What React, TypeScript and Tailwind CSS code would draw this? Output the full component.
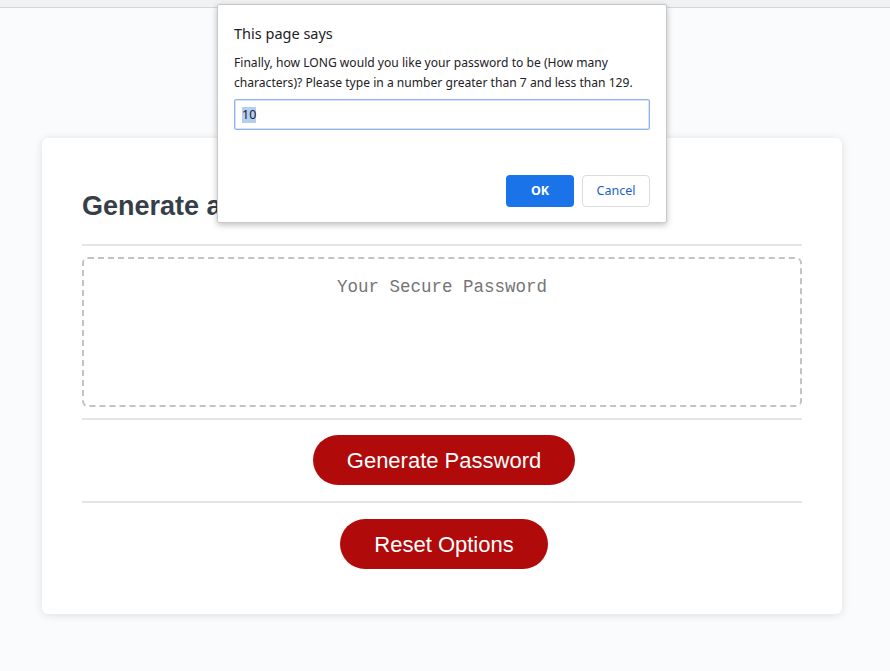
import React from "react";

const PromptDialog = () => {
  return (
    <div className="absolute left-[217px] top-[4px] w-[450px] h-[219px] bg-white border border-[#c9c9c9] rounded-[2px] shadow-[0_2px_6px_rgba(0,0,0,0.25)] px-4 font-['Noto_Sans',sans-serif] text-[#202124]">
      <div className="pt-[18px] text-[14.5px] leading-[20px]">This page says</div>
      <p className="mt-[10px] text-[12.1px] leading-[19.5px] whitespace-nowrap">
        Finally, how LONG would you like your password to be (How many
        <br />
        characters)? Please type in a number greater than 7 and less than 129.
      </p>
      <div className="mt-[7px] h-[31px] border border-[#8fb3e8] rounded-[2px] shadow-[inset_0_0_0_1px_#d4e3f8] flex items-center px-[7px]">
        <span className="text-[12.5px] bg-[#b4cdf2] leading-[16px]">10</span>
      </div>
      <div className="mt-[45px] flex justify-end gap-2">
        <button className="w-[68px] h-[32px] rounded-[4px] bg-[#1a73e8] text-white text-[12.5px] font-bold">
          OK
        </button>
        <button className="w-[68px] h-[32px] rounded-[4px] bg-white border border-[#dadce0] text-[#1a5fc8] text-[12.5px]">
          Cancel
        </button>
      </div>
    </div>
  );
};

export default function App() {
  return (
    <div className="relative min-h-screen bg-[#f9fbfd] font-['Liberation_Sans',Arial,sans-serif]">
      {/* header remnant */}
      <div className="h-2 bg-[#f1f2f3] border-b border-[#d6d6d6]" />

      <div className="pt-[130px] pl-[42px]">
        <div className="w-[800px] bg-white rounded-md shadow-[0_1px_8px_rgba(0,0,0,0.12)] px-10 pt-[52px] pb-[45px]">
          <h2 className="text-[27px] leading-[32px] font-bold text-[#363e48]">
            Generate a Password
          </h2>
          <div className="mt-[22px] h-[2px] bg-[#e4e4e4]" />

          <div className="mt-[11px] h-[150px] border-2 border-dashed border-[#c0c4c8] rounded-md pt-[16px] text-center">
            <span className="font-['Liberation_Mono',monospace] text-[17.5px] leading-[21px] text-[#757575]">
              Your Secure Password
            </span>
          </div>

          <div className="mt-[11px] h-[2px] bg-[#e4e4e4]" />
          <div className="mt-[15px] flex justify-center pl-[4px]">
            <button className="w-[262px] h-[50px] rounded-full bg-[#b00a0b] text-white text-[22px]">
              Generate Password
            </button>
          </div>

          <div className="mt-[16px] h-[2px] bg-[#e4e4e4]" />
          <div className="mt-[16px] flex justify-center pl-[4px]">
            <button className="w-[208px] h-[50px] rounded-full bg-[#b00a0b] text-white text-[22px]">
              Reset Options
            </button>
          </div>
        </div>
      </div>

      <PromptDialog />
    </div>
  );
}
